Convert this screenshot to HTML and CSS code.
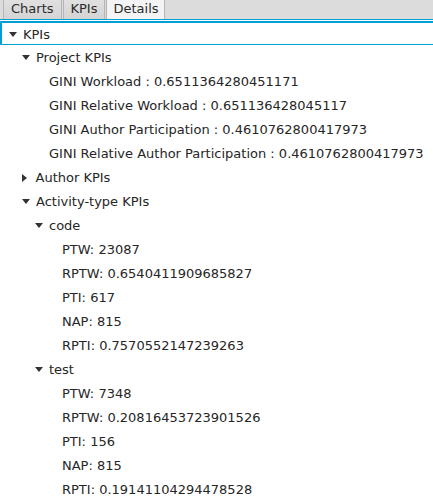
FILE: index.html
```html
<!DOCTYPE html>
<html>
<head>
<meta charset="utf-8">
<link rel="stylesheet" href="styles.css">
</head>
<body>
<div class="tabbar">
  <div class="tab">Charts</div>
  <div class="tab">KPIs</div>
  <div class="tab selected">Details</div>
</div>
<div class="tree">
  <div class="row focused l0"><span class="arrow down"></span><span class="label">KPIs</span></div>
  <div class="row l1"><span class="arrow down"></span><span class="label">Project KPIs</span></div>
  <div class="row l2"><span class="label">GINI Workload : 0.6511364280451171</span></div>
  <div class="row l2"><span class="label">GINI Relative Workload : 0.651136428045117</span></div>
  <div class="row l2"><span class="label">GINI Author Participation : 0.4610762800417973</span></div>
  <div class="row l2"><span class="label">GINI Relative Author Participation : 0.4610762800417973</span></div>
  <div class="row l1"><span class="arrow right"></span><span class="label">Author KPIs</span></div>
  <div class="row l1"><span class="arrow down"></span><span class="label">Activity-type KPIs</span></div>
  <div class="row l2"><span class="arrow down"></span><span class="label">code</span></div>
  <div class="row l3"><span class="label">PTW: 23087</span></div>
  <div class="row l3"><span class="label">RPTW: 0.6540411909685827</span></div>
  <div class="row l3"><span class="label">PTI: 617</span></div>
  <div class="row l3"><span class="label">NAP: 815</span></div>
  <div class="row l3"><span class="label">RPTI: 0.7570552147239263</span></div>
  <div class="row l2"><span class="arrow down"></span><span class="label">test</span></div>
  <div class="row l3"><span class="label">PTW: 7348</span></div>
  <div class="row l3"><span class="label">RPTW: 0.20816453723901526</span></div>
  <div class="row l3"><span class="label">PTI: 156</span></div>
  <div class="row l3"><span class="label">NAP: 815</span></div>
  <div class="row l3"><span class="label">RPTI: 0.19141104294478528</span></div>
</div>
</body>
</html>
```
FILE: styles.css
```css
html, body {
  margin: 0;
  padding: 0;
  background: #ffffff;
  overflow: hidden;
}
body {
  font-family: "DejaVu Sans", sans-serif;
  font-size: 13px;
  color: #262626;
  width: 433px;
  height: 497px;
}
.tabbar {
  height: 19px;
  background: #dcdcdc;
  display: flex;
  align-items: flex-end;
  padding-left: 3px;
  border-bottom: 1px solid #039ed3;
}
.tab {
  height: 19px;
  box-sizing: border-box;
  padding: 0 7px;
  line-height: 17px;
  background: linear-gradient(#e0e0e0, #d4d4d4);
  border: 1px solid #b5b5b5;
  border-bottom: none;
  border-top: none;
  margin-right: 1px;
  color: #2a2a2a;
}
.tab.selected {
  background: #f4f4f4;
  padding: 0 5px 0 6px;
}
.tree {
  padding-top: 1px;
}
.row {
  height: 24px;
  display: flex;
  align-items: center;
  box-sizing: border-box;
  white-space: nowrap;
}
.row.focused {
  border: 2px solid #039ed3;
  border-bottom-width: 1px;
  border-right: none;
}
.label {
  line-height: 22px;
  padding-top: 2px;
}
.l0 { padding-left: 23px; }
.l1 { padding-left: 36px; }
.l2 { padding-left: 49px; }
.l3 { padding-left: 62px; }
.row.focused.l0 { padding-left: 21px; }
.row .arrow {
  width: 0;
  height: 0;
  margin-left: -14px;
  margin-right: 6px;
  margin-top: 1px;
  border-style: solid;
}
.arrow.down {
  border-width: 5.5px 4px 0 4px;
  border-color: #333 transparent transparent transparent;
}
.arrow.right {
  border-width: 4px 0 4px 5.5px;
  border-color: transparent transparent transparent #333;
  margin-right: 8.5px;
}
```
